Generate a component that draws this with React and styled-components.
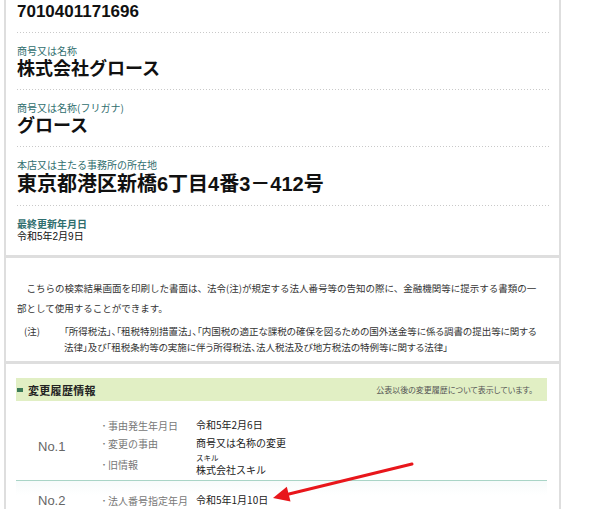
import React from 'react';
import styled, { createGlobalStyle } from 'styled-components';

const Global = createGlobalStyle`
  html, body { margin: 0; padding: 0; background: #fff; }
  body {
    font-family: "Noto Sans CJK JP", "Noto Sans", sans-serif;
    color: #222;
    overflow: hidden;
  }
`;

const Page = styled.div`
  position: relative;
  width: 593px;
  height: 514px;
  overflow: hidden;
  padding-left: 4px;
  box-sizing: border-box;
`;

const Column = styled.div`
  width: 557px;
`;

const Section = styled.section`
  border: 2px solid #dedede;
  border-top-width: ${p => (p.$first ? 0 : 1)}px;
  border-bottom-width: ${p => (p.$last ? 0 : 2)}px;
  padding: ${p => p.$pad};
`;

const Field = styled.div`
  padding: 12px 0 9px;
  background-image: linear-gradient(to right, #c9c9c9 1px, transparent 1px);
  background-size: 3px 1px;
  background-repeat: repeat-x;
  background-position: left bottom;
  &:first-child { padding-top: 0; }
  &:last-child { background-image: none; padding-bottom: 11px; }
`;

const FieldLabel = styled.div`
  font-size: 10px;
  line-height: 12px;
  color: #2f6e6e;
  font-weight: ${p => (p.$strong ? 700 : 400)};
`;

const FieldValue = styled.div`
  font-family: "Liberation Sans", "Noto Sans CJK JP", sans-serif;
  font-size: ${p => p.$size}px;
  line-height: ${p => p.$lh}px;
  font-weight: ${p => (p.$bold ? 700 : 400)};
  color: #111;
`;

const Para = styled.p`
  margin: 0;
  font-size: 9.5px;
  line-height: 20px;
  text-indent: 1em;
  color: #333;
`;

const Note = styled.div`
  display: grid;
  grid-template-columns: 40px 1fr;
  margin-top: 5px;
  padding-left: 7px;
  font-size: 9.5px;
  line-height: 16px;
  font-feature-settings: "palt";
  color: #333;
`;

const Bar = styled.div`
  height: 23px;
  background: #e1efc4;
  display: flex;
  align-items: center;
  justify-content: space-between;
  padding: 0 14px 0 1px;
`;

const BarTitle = styled.h2`
  margin: 0;
  display: flex;
  align-items: center;
  gap: 5px;
  font-size: 11px;
  font-weight: 700;
  letter-spacing: 0.3px;
  color: #222;
  &::before {
    content: "";
    width: 6px;
    height: 4px;
    background: #3b7a57;
  }
`;

const BarNote = styled.span`
  font-size: 8px;
  color: #555;
  font-feature-settings: "palt";
`;

const Record = styled.div`
  display: grid;
  grid-template-columns: 84px 1fr;
  align-items: center;
  padding: ${p => p.$pad};
  border-bottom: ${p => (p.$line ? '1px solid #a9d4c6' : 'none')};
  background: ${p => (p.$tint ? 'linear-gradient(#f7fbfb, #fff 14px)' : 'transparent')};
`;

const RecordNo = styled.div`
  padding-left: 22px;
  font-family: "Liberation Sans", sans-serif;
  font-size: 13px;
  color: #666;
`;

const Items = styled.dl`
  margin: 0;
  display: grid;
  grid-template-columns: 96px 1fr;
  align-items: center;
`;

const ItemLabel = styled.dt`
  min-height: 18px;
  display: flex;
  align-items: center;
  white-space: nowrap;
  font-size: 10px;
  color: #777;
  &::before {
    content: "・";
    display: inline-block;
    width: 8px;
    font-size: 8px;
    text-align: left;
  }
`;

const ItemValue = styled.dd`
  margin: 0;
  font-size: 10px;
  line-height: ${p => (p.$stack ? '14px' : '18px')};
  color: #222;
`;

const Kana = styled.div`
  font-size: 7.5px;
  line-height: 11px;
`;

const Arrow = styled.svg`
  position: absolute;
  left: 0;
  top: 0;
  pointer-events: none;
`;

export default function App() {
  return (
    <Page>
      <Global />
      <Column>
        <Section $first $pad="0 10px 0 11px">
          <Field>
            <FieldValue $size={17} $lh={24} $bold>7010401171696</FieldValue>
          </Field>
          <Field>
            <FieldLabel>商号又は名称</FieldLabel>
            <FieldValue $size={18} $lh={24} $bold>株式会社グロース</FieldValue>
          </Field>
          <Field>
            <FieldLabel>商号又は名称(フリガナ)</FieldLabel>
            <FieldValue $size={18} $lh={24} $bold>グロース</FieldValue>
          </Field>
          <Field>
            <FieldLabel>本店又は主たる事務所の所在地</FieldLabel>
            <FieldValue $size={20} $lh={26} $bold>東京都港区新橋6丁目4番3－412号</FieldValue>
          </Field>
          <Field>
            <FieldLabel $strong>最終更新年月日</FieldLabel>
            <FieldValue $size={10} $lh={14}>令和5年2月9日</FieldValue>
          </Field>
        </Section>

        <Section $pad="20px 16px 6px 11px">
          <Para>
            こちらの検索結果画面を印刷した書面は、法令(注)が規定する法人番号等の告知の際に、金融機関等に提示する書類の一部として使用することができます。
          </Para>
          <Note>
            <span>(注)</span>
            <span>「所得税法」、「租税特別措置法」、「内国税の適正な課税の確保を図るための国外送金等に係る調書の提出等に関する法律」及び「租税条約等の実施に伴う所得税法、法人税法及び地方税法の特例等に関する法律」</span>
          </Note>
        </Section>

        <Section $last $pad="14px 12px 0 10px">
          <Bar>
            <BarTitle>変更履歴情報</BarTitle>
            <BarNote>公表以後の変更履歴について表示しています。</BarNote>
          </Bar>
          <Record $line $pad="15px 0 3px">
            <RecordNo>No.1</RecordNo>
            <Items>
              <ItemLabel>事由発生年月日</ItemLabel>
              <ItemValue>令和5年2月6日</ItemValue>
              <ItemLabel>変更の事由</ItemLabel>
              <ItemValue>商号又は名称の変更</ItemValue>
              <ItemLabel>旧情報</ItemLabel>
              <ItemValue $stack>
                <Kana>スキル</Kana>
                株式会社スキル
              </ItemValue>
            </Items>
          </Record>
          <Record $tint $pad="10px 0 0">
            <RecordNo>No.2</RecordNo>
            <Items>
              <ItemLabel>法人番号指定年月</ItemLabel>
              <ItemValue>令和5年1月10日</ItemValue>
            </Items>
          </Record>
        </Section>
      </Column>

      <Arrow width="593" height="514" viewBox="0 0 593 514">
        <line x1="412" y1="464" x2="289" y2="494" stroke="#e8161b" strokeWidth="3" strokeLinecap="round" />
        <polygon points="273,498 290.5,501.5 286.8,486.8" fill="#e8161b" />
      </Arrow>
    </Page>
  );
}
